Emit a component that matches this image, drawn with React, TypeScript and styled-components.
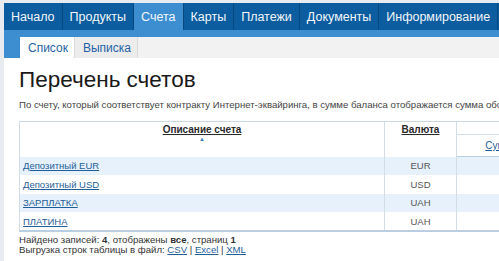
import React from "react";
import styled, { createGlobalStyle } from "styled-components";

const GlobalStyle = createGlobalStyle`
  html, body {
    margin: 0;
    padding: 0;
    overflow: hidden;
    background: #e8ecf0;
    font-family: "Liberation Sans", Arial, sans-serif;
  }
`;

const Page = styled.div`
  padding: 3px 0 0 4px;
  width: 900px;
`;

const NavBar = styled.nav`
  display: flex;
  height: 27px;
  background: #0b5d9f;
`;

const NavItem = styled.a<{ $active?: boolean }>`
  display: flex;
  align-items: center;
  padding: 0 7px;
  font-size: 12.5px;
  color: #f2f6fa;
  text-decoration: none;
  background: ${(p) => (p.$active ? "#3d8ed1" : "transparent")};
  border-right: 1.5px solid #07497f;
  white-space: nowrap;
`;

const SubNav = styled.div`
  display: flex;
  height: 21px;
  background: #f2f2f2;
  border-top: 7px solid #3d8ed1;
  border-left: 16px solid #3d8ed1;
`;

const SubTab = styled.a<{ $active?: boolean }>`
  display: flex;
  align-items: center;
  padding: 0 6px 0 8px;
  font-size: 12px;
  color: #1f63a6;
  text-decoration: none;
  background: ${(p) => (p.$active ? "#ffffff" : "#ececec")};
  border-right: 1px solid #dcdcdc;
`;

const Content = styled.main`
  background: #ffffff;
  padding: 9px 0 20px 15px;
`;

const Title = styled.h1`
  margin: 0;
  font-size: 22.5px;
  line-height: 26px;
  font-weight: normal;
  color: #1a1a1a;
`;

const Note = styled.p`
  margin: 6px 0 10px;
  font-size: 9.6px;
  line-height: 12px;
  color: #444;
  white-space: nowrap;
`;

const Table = styled.table`
  border-collapse: collapse;
  font-size: 9.5px;
  border-top: 1px solid #c8d8e6;
  border-bottom: 2px solid #b9cee0;
`;

const HeadCell = styled.th<{ $w?: number }>`
  width: ${(p) => (p.$w ? `${p.$w}px` : "auto")};
  padding: 0;
  vertical-align: top;
  text-align: center;
  font-weight: bold;
  font-size: 10px;
  color: #2a2a2a;
  border-left: 1px solid #d3dde6;
  border-right: 1px solid #d3dde6;
`;

const GroupCell = styled.th`
  height: 12px;
  padding: 0;
  border-left: 1px solid #d3dde6;
  border-bottom: 1px solid #d3dde6;
`;

const SubHeadCell = styled.th<{ $w: number }>`
  width: ${(p) => p.$w}px;
  height: 21px;
  padding: 0;
  vertical-align: middle;
  text-align: center;
  font-weight: normal;
  font-size: 10px;
  border-left: 1px solid #d3dde6;
  border-bottom: 1px solid #b9cee0;
`;

const HeadRow = styled.tr`
  border-bottom: 1px solid #b9cee0;
`;

const SortLink = styled.a`
  display: inline-block;
  margin-top: 2px;
  color: #2a2a2a;
  text-decoration: underline;
`;

const PlainSortLink = styled.a`
  color: #1f5e99;
  text-decoration: underline;
`;

const SortArrow = styled.div`
  font-size: 6px;
  line-height: 8px;
  color: #3b7fc4;
`;

const BodyRow = styled.tr<{ $alt?: boolean }>`
  height: 18.6px;
  background: ${(p) => (p.$alt ? "#e6f1fb" : "#ffffff")};
`;

const Cell = styled.td<{ $center?: boolean }>`
  padding: 0 3px;
  text-align: ${(p) => (p.$center ? "center" : "left")};
  color: #555;
  border-left: 1px solid #d3dde6;
  border-right: 1px solid #d3dde6;
  vertical-align: middle;
`;

const Link = styled.a`
  color: #1f5e99;
  text-decoration: underline;
`;

const Footer = styled.div`
  margin-top: 3px;
  font-size: 9.6px;
  line-height: 10.5px;
  color: #333;
`;

const navItems = ["Начало", "Продукты", "Счета", "Карты", "Платежи", "Документы", "Информирование", "Настройки"];

const rows = [
  { name: "Депозитный EUR", cur: "EUR" },
  { name: "Депозитный USD", cur: "USD" },
  { name: "ЗАРПЛАТКА", cur: "UAH" },
  { name: "ПЛАТИНА", cur: "UAH" },
];

export default function App() {
  return (
    <>
      <GlobalStyle />
      <Page>
        <NavBar>
          {navItems.map((n) => (
            <NavItem key={n} $active={n === "Счета"}>
              {n}
            </NavItem>
          ))}
        </NavBar>
        <SubNav>
          <SubTab $active>Список</SubTab>
          <SubTab>Выписка</SubTab>
        </SubNav>
        <Content>
          <Title>Перечень счетов</Title>
          <Note>
            По счету, который соответствует контракту Интернет-эквайринга, в сумме баланса отображается сумма оборотов по счету за текущий день.
          </Note>
          <Table>
            <thead>
              <HeadRow>
                <HeadCell rowSpan={2} $w={364}>
                  <SortLink>Описание счета</SortLink>
                  <SortArrow>▲</SortArrow>
                </HeadCell>
                <HeadCell rowSpan={2} $w={71}>
                  <SortLink>Валюта</SortLink>
                </HeadCell>
                <GroupCell colSpan={2} />
              </HeadRow>
              <tr>
                <SubHeadCell $w={130}>
                  <PlainSortLink>Сумма на счете</PlainSortLink>
                </SubHeadCell>
                <SubHeadCell $w={130}>
                  <PlainSortLink>Доступно</PlainSortLink>
                </SubHeadCell>
              </tr>
            </thead>
            <tbody>
              {rows.map((r, i) => (
                <BodyRow key={r.name} $alt={i % 2 === 0}>
                  <Cell>
                    <Link>{r.name}</Link>
                  </Cell>
                  <Cell $center>{r.cur}</Cell>
                  <Cell />
                  <Cell />
                </BodyRow>
              ))}
            </tbody>
          </Table>
          <Footer>
            <div>
              Найдено записей: <b>4</b>, отображены <b>все</b>, страниц <b>1</b>
            </div>
            <div>
              Выгрузка строк таблицы в файл: <Link>CSV</Link> | <Link>Excel</Link> | <Link>XML</Link>
            </div>
          </Footer>
        </Content>
      </Page>
    </>
  );
}
